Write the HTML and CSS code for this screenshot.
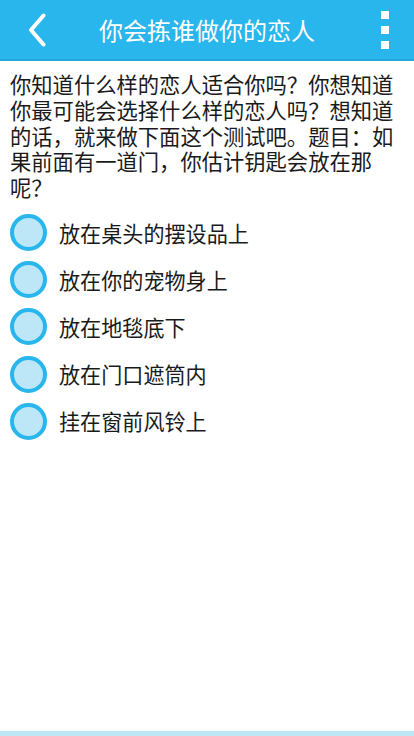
FILE: index.html
```html
<!DOCTYPE html>
<html lang="zh">
<head>
<meta charset="utf-8">
<title>你会拣谁做你的恋人</title>
<link rel="stylesheet" href="styles.css">
</head>
<body>
<div class="screen">
  <header class="topbar">
    <div class="back">
      <svg width="18" height="34" viewBox="0 0 18 34"><polyline points="15.5,2.5 3,17 15.5,31.5" fill="none" stroke="#fff" stroke-width="4" stroke-linecap="round" stroke-linejoin="round"/></svg>
    </div>
    <h1 class="title">你会拣谁做你的恋人</h1>
    <div class="menu"><span></span><span></span><span></span></div>
  </header>
  <main class="content">
    <p class="question">你知道什么样的恋人适合你吗？你想知道你最可能会选择什么样的恋人吗？想知道的话，就来做下面这个测试吧。题目：如果前面有一道门，你估计钥匙会放在那呢？</p>
    <ul class="options">
      <li class="option"><span class="radio"></span><span class="label">放在桌头的摆设品上</span></li>
      <li class="option"><span class="radio"></span><span class="label">放在你的宠物身上</span></li>
      <li class="option"><span class="radio"></span><span class="label">放在地毯底下</span></li>
      <li class="option"><span class="radio"></span><span class="label">放在门口遮筒内</span></li>
      <li class="option"><span class="radio"></span><span class="label">挂在窗前风铃上</span></li>
    </ul>
  </main>
  <div class="bottombar"></div>
</div>
</body>
</html>
```

FILE: styles.css
```css
html, body {
  margin: 0;
  padding: 0;
  background: #fff;
}
.screen {
  width: 414px;
  height: 736px;
  display: flex;
  flex-direction: column;
  font-family: "Noto Sans CJK SC", "Noto Sans", sans-serif;
  color: #1a1a1a;
  overflow: hidden;
}
.topbar {
  height: 59px;
  background: #29b6ec;
  border-bottom: 2px solid #22a8dd;
  display: flex;
  align-items: center;
  flex-shrink: 0;
}
.back {
  width: 29px;
  padding-left: 28px;
  display: flex;
  align-items: center;
  padding-top: 1px;
}
.title {
  flex: 1;
  margin: 0;
  text-align: center;
  color: #fff;
  font-size: 24px;
  font-weight: normal;
  line-height: 30px;
  padding-right: 4px;
}
.menu {
  width: 8px;
  margin-right: 25px;
  margin-left: 20px;
  display: flex;
  flex-direction: column;
  gap: 7px;
  padding-top: 1px;
}
.menu span {
  display: block;
  width: 8px;
  height: 8px;
  background: #fff;
}
.content {
  flex: 1;
  padding: 10px 10px 0 10px;
}
.question {
  margin: 0;
  font-size: 21.3px;
  line-height: 25.8px;
}
.options {
  list-style: none;
  margin: 9px 0 0 0;
  padding: 0;
  display: flex;
  flex-direction: column;
}
.option {
  height: 47.2px;
  display: flex;
  align-items: center;
  gap: 12px;
}
.radio {
  width: 29px;
  height: 29px;
  border: 4px solid #29b6ec;
  border-radius: 50%;
  background: #bde6f7;
  flex-shrink: 0;
}
.label {
  font-size: 21.1px;
  line-height: 26px;
}
.bottombar {
  height: 5px;
  background: #bde6f7;
  flex-shrink: 0;
}
```
